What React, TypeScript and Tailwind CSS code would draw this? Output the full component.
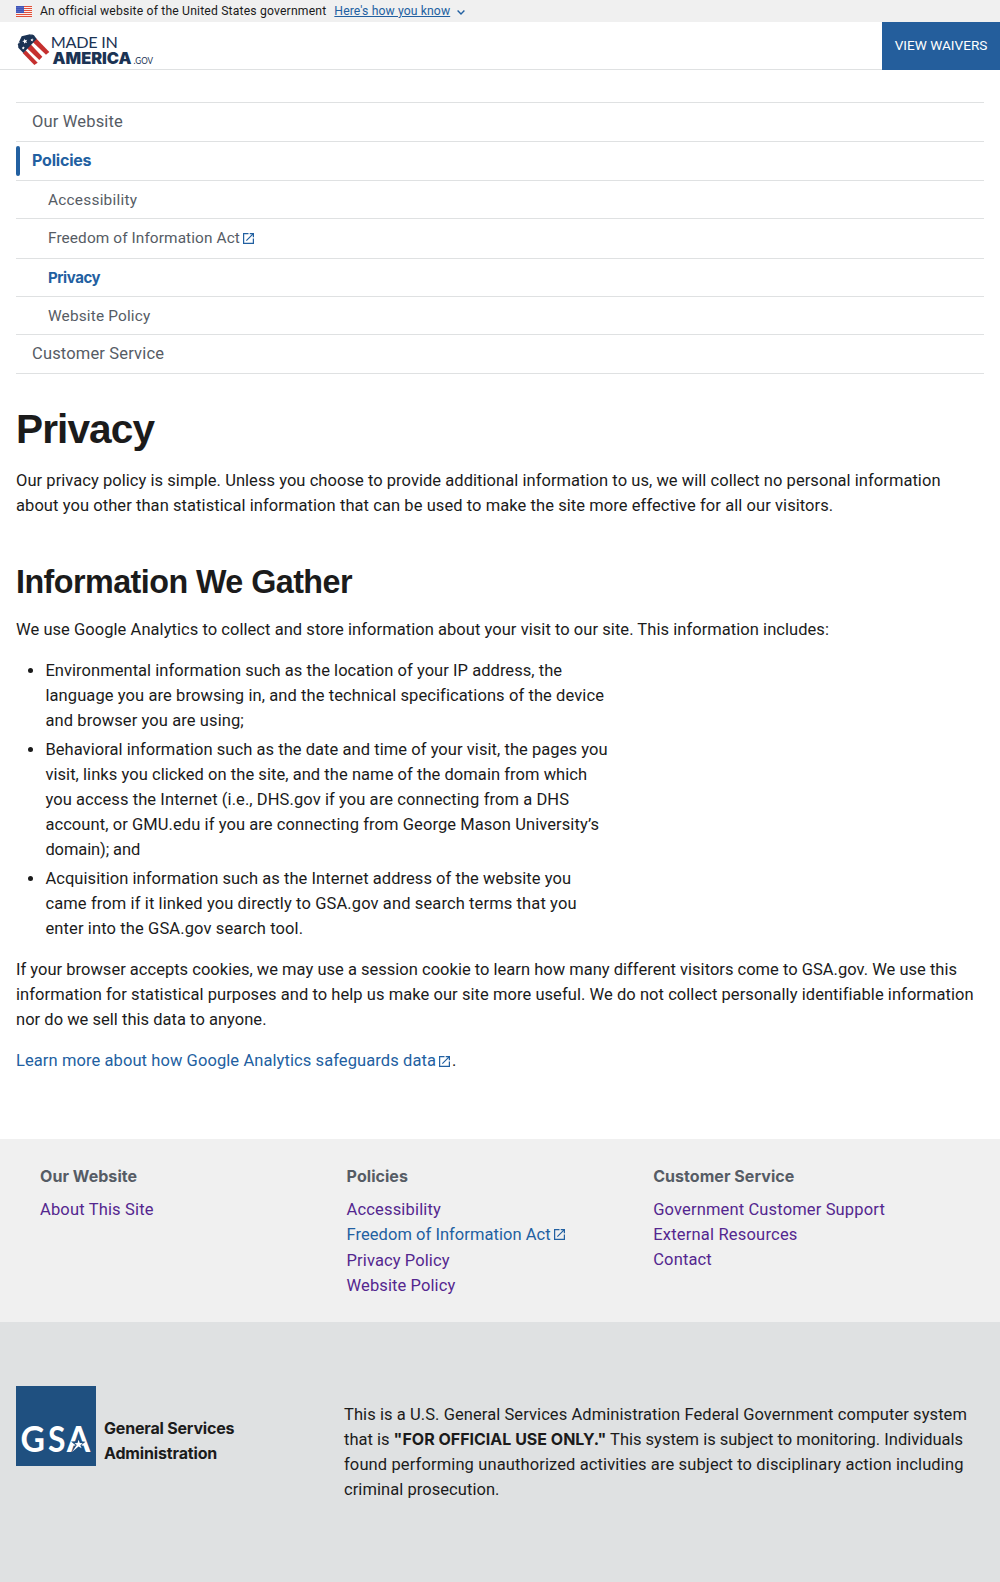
import React from "react";

type LineSpec = [text: string, tracking: string];

function Lines({ lines }: { lines: LineSpec[] }) {
  return (
    <>
      {lines.map(([text, tracking]) => (
        <span key={text} className={`block whitespace-nowrap ${tracking}`}>
          {text}
        </span>
      ))}
    </>
  );
}

function ExternalIcon({ className = "" }: { className?: string }) {
  return (
    <svg viewBox="0 0 18 18" className={`inline-block h-[11px] w-[11px] shrink-0 text-[#2260a1] ${className}`} fill="currentColor" aria-hidden="true">
      <path d="M16 16H2V2h7V0H0v18h18V9h-2v7zM11 0v2h3.6L4.8 11.800l1.400 1.400L16 3.400V7h2V0h-7z" />
    </svg>
  );
}

function UsFlag() {
  return (
    <svg viewBox="0 0 16 11" className="h-[11px] w-4" aria-hidden="true">
      <rect width="16" height="11" fill="#fff" />
      {[0, 2, 4, 6, 8, 10].map((y) => (
        <rect key={y} y={y} width="16" height="1.1" fill="#e0503a" />
      ))}
      <rect width="8" height="7" fill="#3f55b8" />
      {[1, 3, 5].map((y) =>
        [1, 3, 5, 7].map((x) => <circle key={`${x}-${y}`} cx={x} cy={y + 0.3} r="0.4" fill="#b9c3ee" />)
      )}
    </svg>
  );
}

const STAR = "M0-5L1.300-1.700L4.800-1.500L2.100.7L3 4.100L0 2.200L-3 4.100L-2.100.7L-4.800-1.500L-1.300-1.700Z";

function Logo() {
  return (
    <svg viewBox="0 0 140 34" className="h-[34px] w-[140px]" role="img" aria-label="Made in America.gov">
      <g transform="translate(0 -12.700) scale(.33333)">
        <g transform="translate(-48 0)">
          <path d="M92 72L127 109L118 119L81 84Z" fill="#c5302f" />
          <path d="M77 90L113 127L103 134L68 98Z" fill="#c5302f" />
          <path d="M108 54L148 95L138 103L98 65Z" fill="#c5302f" />
          <path d="M65 48L93 41L102 45L110 56L70 98L55 82L54 72Z" fill="#1b3354" />
          <g fill="#fff">
            <path d={STAR} transform="translate(75 63) rotate(-15) scale(1.600)" />
            <path d={STAR} transform="translate(96 59) rotate(10) scale(1.050)" />
            <path d={STAR} transform="translate(70 83) rotate(10) scale(1.050)" />
            <path d={STAR} transform="translate(93 43) scale(.5)" />
            <path d={STAR} transform="translate(57 67) scale(.5)" />
          </g>
        </g>
      </g>
      <g fill="#1b3354">
        <text x="34.800" y="15" textLength="67" fontFamily="Lato, sans-serif" fontSize="16.200">
          MADE IN
        </text>
        <text x="36.500" y="30.700" textLength="79" lengthAdjust="spacingAndGlyphs" fontFamily="Inter, sans-serif" fontWeight="900" fontSize="15.800">
          AMERICA
        </text>
        <text x="117.500" y="30.700" textLength="19.500" lengthAdjust="spacingAndGlyphs" fontFamily="Lato, sans-serif" fontSize="8.600">
          .GOV
        </text>
      </g>
    </svg>
  );
}

function GsaLogo() {
  return (
    <svg viewBox="0 0 80 80" className="h-20 w-20 shrink-0 bg-[#1f5080]" role="img" aria-label="GSA">
      <g fill="#fff" fontFamily="Lato, sans-serif" fontWeight="700" fontSize="35.500">
        <text x="4.500" y="66.300" textLength="24.500" lengthAdjust="spacingAndGlyphs">G</text>
        <text x="32" y="66.300" textLength="17.500" lengthAdjust="spacingAndGlyphs">S</text>
        <text x="50.800" y="66.300" textLength="23.500" lengthAdjust="spacingAndGlyphs">A</text>
      </g>
      <path d="M62.600 50.500L64.400 55.300L69.500 55.800L65.500 58.900L68 65L62.500 62L55.800 67.500L59.500 59.200L55 55.500L60.800 55.300Z" fill="#1f5080" />
      <path d="M62.600 53.800L63.800 57L66.800 57.300L64.300 59.200L65.600 62.300L62.500 60.600L56 66L60.800 59L58.500 57.200L61.500 57Z" fill="#fff" />
    </svg>
  );
}

function FooterHeading({ children, tracking }: { children: string; tracking: string }) {
  return <h3 className={`mb-2 font-['Inter',sans-serif] text-[16px] leading-[25px] font-bold text-[#565c65] ${tracking}`}>{children}</h3>;
}

export default function App() {
  return (
    <div className="h-[1582px] bg-white font-['Roboto',sans-serif] text-[16.5px] leading-[25px] text-[#1b1b1b]">
      <div className="flex h-[22px] items-center bg-[#f0f0f0] px-4 text-[12.2px] leading-none">
        <UsFlag />
        <span className="ml-2 tracking-[0.165px]">An official website of the United States government</span>
        <a className="ml-2 tracking-[0.11px] text-[#2260a1] underline underline-offset-1">Here's how you know</a>
        <svg viewBox="0 0 8 5" className="mt-[3px] ml-[7px] h-[5px] w-2" fill="none" stroke="#2260a1" strokeWidth="1.4">
          <path d="M.6.6L4 4L7.400.6" />
        </svg>
      </div>

      <header className="flex h-12 border-b border-[#dfe1e2] pl-4">
        <div className="pt-[11px]">
          <Logo />
        </div>
        <a className="-mb-px ml-auto flex w-[118px] items-center justify-center bg-[#245e9c] pb-0.5 text-[13.6px] text-white">VIEW WAIVERS</a>
      </header>

      <nav className="mx-4 mt-8 text-[#565c65]">
        <div className="flex h-[39px] items-center border-t border-[#dfe1e2] pb-0.5 pl-4 tracking-[0.16px]">Our Website</div>
        <div className="flex h-[39px] items-center border-t border-[#dfe1e2] font-['Inter',sans-serif] text-[16px] font-bold text-[#2260a1]">
          <span className="h-[30px] w-1 rounded-full bg-[#2260a1]" />
          <span className="pb-0.5 pl-3 tracking-[-0.2px]">Policies</span>
        </div>
        <div className="text-[15.4px]">
          <div className="flex h-[38px] items-center border-t border-[#dfe1e2] pt-0.5 pl-8 tracking-[0.24px]">Accessibility</div>
          <div className="flex h-10 items-center border-t border-[#dfe1e2] pb-px pl-8">
            <span className="tracking-[0.1px]">Freedom of Information Act</span>
            <ExternalIcon className="mt-px ml-[3px]" />
          </div>
          <div className="flex h-[38px] items-center border-t border-[#dfe1e2] pl-8 font-['Inter',sans-serif] text-[15px] font-bold tracking-[-0.42px] text-[#2260a1]">
            Privacy
          </div>
          <div className="flex h-[38px] items-center border-t border-[#dfe1e2] pt-0.5 pl-8 tracking-[0.16px]">Website Policy</div>
        </div>
        <div className="flex h-10 items-center border-y border-[#dfe1e2] pb-px pl-4 tracking-[0.16px]">Customer Service</div>
      </nav>

      <main className="h-[765px] px-4 pt-8">
        <h1 className="font-['Liberation_Sans',sans-serif] text-[40.6px] leading-[46px] font-bold tracking-[-0.9px]">Privacy</h1>
        <p className="mt-4">
          <Lines
            lines={[
              ["Our privacy policy is simple. Unless you choose to provide additional information to us, we will collect no personal information", "tracking-[0.048px]"],
              ["about you other than statistical information that can be used to make the site more effective for all our visitors.", "tracking-[0.070px]"],
            ]}
          />
        </p>
        <h2 className="mt-[46px] font-['Liberation_Sans',sans-serif] text-[32.3px] leading-9 font-bold tracking-[-0.55px]">Information We Gather</h2>
        <p className="mt-[17px]">
          <Lines lines={[["We use Google Analytics to collect and store information about your visit to our site. This information includes:", "tracking-[0.050px]"]]} />
        </p>
        <ul className="mt-4 ml-[29.4px] list-disc space-y-1">
          <li>
            <Lines
              lines={[
                ["Environmental information such as the location of your IP address, the", "tracking-[0.046px]"],
                ["language you are browsing in, and the technical specifications of the device", "tracking-[0.093px]"],
                ["and browser you are using;", "tracking-[0.1px]"],
              ]}
            />
          </li>
          <li>
            <Lines
              lines={[
                ["Behavioral information such as the date and time of your visit, the pages you", "tracking-[0.055px]"],
                ["visit, links you clicked on the site, and the name of the domain from which", "tracking-[0.053px]"],
                ["you access the Internet (i.e., DHS.gov if you are connecting from a DHS", "tracking-[0.083px]"],
                ["account, or GMU.edu if you are connecting from George Mason University’s", "tracking-[0.078px]"],
                ["domain); and", "tracking-[-0.1px]"],
              ]}
            />
          </li>
          <li>
            <Lines
              lines={[
                ["Acquisition information such as the Internet address of the website you", "tracking-[0.057px]"],
                ["came from if it linked you directly to GSA.gov and search terms that you", "tracking-[0.113px]"],
                ["enter into the GSA.gov search tool.", "tracking-[0.12px]"],
              ]}
            />
          </li>
        </ul>
        <p className="mt-4">
          <Lines
            lines={[
              ["If your browser accepts cookies, we may use a session cookie to learn how many different visitors come to GSA.gov. We use this", "tracking-[0.014px]"],
              ["information for statistical purposes and to help us make our site more useful. We do not collect personally identifiable information", "tracking-[0.057px]"],
              ["nor do we sell this data to anyone.", "tracking-[0.025px]"],
            ]}
          />
        </p>
        <p className="mt-4 flex items-center">
          <a className="tracking-[0.086px] text-[#2260a1]">Learn more about how Google Analytics safeguards data</a>
          <ExternalIcon className="mt-px ml-[3.5px]" />
          <span className="ml-[1.5px]">.</span>
        </p>
      </main>

      <div className="grid h-[183px] grid-cols-[306.6px_306.6px_1fr] bg-[#f0f0f0] pt-[25px] pl-10 text-[#54278f]">
        <div>
          <FooterHeading tracking="tracking-[0.05px]">Our Website</FooterHeading>
          <a className="tracking-[0.164px]">About This Site</a>
        </div>
        <div>
          <FooterHeading tracking="tracking-[0.05px]">Policies</FooterHeading>
          <ul>
            <li className="tracking-[0.16px]">Accessibility</li>
            <li className="flex h-[26px]">
              <span className="tracking-[0.04px] text-[#2260a1]">Freedom of Information Act</span>
              <ExternalIcon className="mt-[7px] ml-[3px]" />
            </li>
            <li className="tracking-[0.1px]">Privacy Policy</li>
            <li className="tracking-[0.1px]">Website Policy</li>
          </ul>
        </div>
        <div>
          <FooterHeading tracking="tracking-[0.05px]">Customer Service</FooterHeading>
          <ul>
            <li className="tracking-[0.145px]">Government Customer Support</li>
            <li className="tracking-[0.2px]">External Resources</li>
            <li className="tracking-[0.15px]">Contact</li>
          </ul>
        </div>
      </div>

      <footer className="flex h-[260px] bg-[#dfe1e2] pl-4">
        <div className="flex w-[328px] pt-16">
          <GsaLogo />
          <div className="ml-2 pt-[30px] font-['Inter',sans-serif] text-[16px] font-bold">
            <span className="block tracking-[-0.19px]">General Services</span>
            <span className="block tracking-[-0.15px]">Administration</span>
          </div>
        </div>
        <div className="pt-20 whitespace-nowrap">
          <span className="block tracking-[0.076px]">This is a U.S. General Services Administration Federal Government computer system</span>
          <span className="block">
            that is <b className="font-['Inter',sans-serif] text-[16px] leading-none font-bold tracking-[0px]">"FOR OFFICIAL USE ONLY."</b> This system is subject to monitoring. Individuals
          </span>
          <span className="block tracking-[0.12px]">found performing unauthorized activities are subject to disciplinary action including</span>
          <span className="block tracking-[0.057px]">criminal prosecution.</span>
        </div>
      </footer>
    </div>
  );
}
